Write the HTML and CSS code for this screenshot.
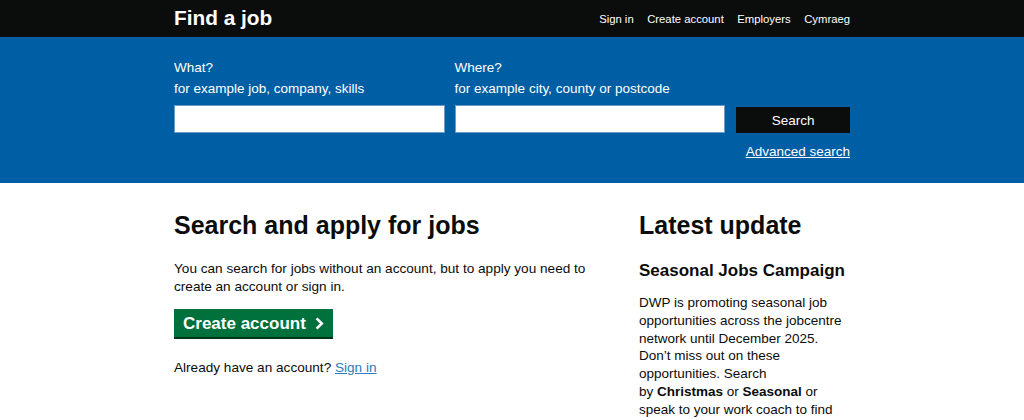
FILE: index.html
```html
<!DOCTYPE html>
<html lang="en">
<head>
<meta charset="utf-8">
<title>Find a job</title>
<link rel="stylesheet" href="styles.css">
</head>
<body>
<header class="topbar">
  <div class="container topbar-inner">
    <a class="brand" href="#">Find a job</a>
    <nav class="topnav">
      <a href="#">Sign in</a>
      <a href="#">Create account</a>
      <a href="#">Employers</a>
      <a href="#">Cymraeg</a>
    </nav>
  </div>
</header>
<section class="search">
  <div class="container">
    <form class="search-form">
      <div class="field">
        <label class="label" for="what">What?</label>
        <span class="hint">for example job, company, skills</span>
        <input class="input" id="what" type="text">
      </div>
      <div class="field">
        <label class="label" for="where">Where?</label>
        <span class="hint">for example city, county or postcode</span>
        <input class="input" id="where" type="text">
      </div>
      <div class="field field-btn">
        <button class="search-btn" type="button">Search</button>
      </div>
    </form>
    <div class="advanced"><a href="#">Advanced search</a></div>
  </div>
</section>
<main class="container main">
  <div class="col-main">
    <h1 class="h1">Search and apply for jobs</h1>
    <p class="body intro">You can search for jobs without an account, but to apply you need to create an account or sign in.</p>
    <a class="green-btn" href="#">Create account <svg class="chev" width="9" height="13" viewBox="0 0 9 13" aria-hidden="true"><path d="M1.6 1.3 L6.8 6.5 L1.6 11.7" fill="none" stroke="#fff" stroke-width="2.6"/></svg></a>
    <p class="body signin">Already have an account? <a href="#" class="link">Sign in</a></p>
  </div>
  <aside class="col-side">
    <h2 class="h1 side-h1">Latest update</h2>
    <h3 class="h3">Seasonal Jobs Campaign</h3>
    <p class="body side-body">DWP is promoting seasonal job opportunities across the jobcentre network until December 2025. Don’t miss out on these opportunities. Search by&nbsp;<b>Christmas</b> or <b>Seasonal</b> or speak to your work coach to find out more.</p>
  </aside>
</main>
</body>
</html>
```
FILE: styles.css
```css
* { box-sizing: border-box; }
html, body { margin: 0; padding: 0; }
body {
  font-family: "Liberation Sans", Arial, sans-serif;
  color: #0b0c0c;
  background: #fff;
}
.container { width: 676px; margin: 0 auto; }

.topbar { background: #0b0c0c; height: 37px; }
.topbar-inner {
  display: flex;
  align-items: center;
  justify-content: space-between;
  height: 37px;
}
.brand {
  color: #fff;
  font-weight: bold;
  font-size: 20.8px;
  text-decoration: none;
  line-height: 1;
}
.topnav { display: flex; gap: 13.5px; }
.topnav a {
  color: #fff;
  text-decoration: none;
  font-size: 11.3px;
}

.search {
  background: #005ea5;
  padding: 22px 0 22px;
  color: #fff;
}
.search-form {
  display: flex;
  gap: 10px;
  align-items: flex-end;
}
.field { display: flex; flex-direction: column; width: 271px; }
.label, .hint { font-size: 13.5px; line-height: 18px; }
.hint { margin-top: 3px; margin-bottom: 7px; }
.input {
  height: 28px;
  border: 1px solid #6d9ccb;
  background: #fff;
  margin: 0;
  padding: 0 4px;
  font: inherit;
}
.field-btn { width: 114px; margin-left: 1px; }
.search-btn {
  height: 26px;
  background: #0b0c0c;
  color: #fff;
  border: 0;
  font-family: inherit;
  font-size: 13.5px;
  margin: 0;
}
.advanced {
  text-align: right;
  margin-top: 10px;
  font-size: 13.5px;
  line-height: 18px;
}
.advanced a { color: #fff; text-decoration: underline; }

.main {
  display: grid;
  grid-template-columns: 440px 211px;
  column-gap: 25px;
  padding-top: 27px;
}
.col-main { display: flex; flex-direction: column; align-items: flex-start; }
.h1 {
  font-size: 25px;
  font-weight: bold;
  line-height: 30px;
  margin: 0 0 20px;
}
.body {
  font-size: 13.6px;
  line-height: 17.5px;
  margin: 0;
}
.intro { margin-bottom: 14px; }
.green-btn {
  display: flex;
  align-items: center;
  height: 28px;
  background: #00703c;
  color: #fff;
  font-weight: bold;
  font-size: 17px;
  padding: 1px 9px 0 9px;
  text-decoration: none;
  box-shadow: 0 2px 0 #003618;
}
.chev { margin-left: 9px; }
.signin { margin-top: 22px; }
.link { color: #2a7bc1; text-decoration: underline; }
.side-h1 { margin-bottom: 20px; }
.h3 {
  font-size: 17px;
  font-weight: bold;
  line-height: 22px;
  margin: 0 0 12px;
}
.side-body { font-size: 13.5px; line-height: 17.8px; }
```
